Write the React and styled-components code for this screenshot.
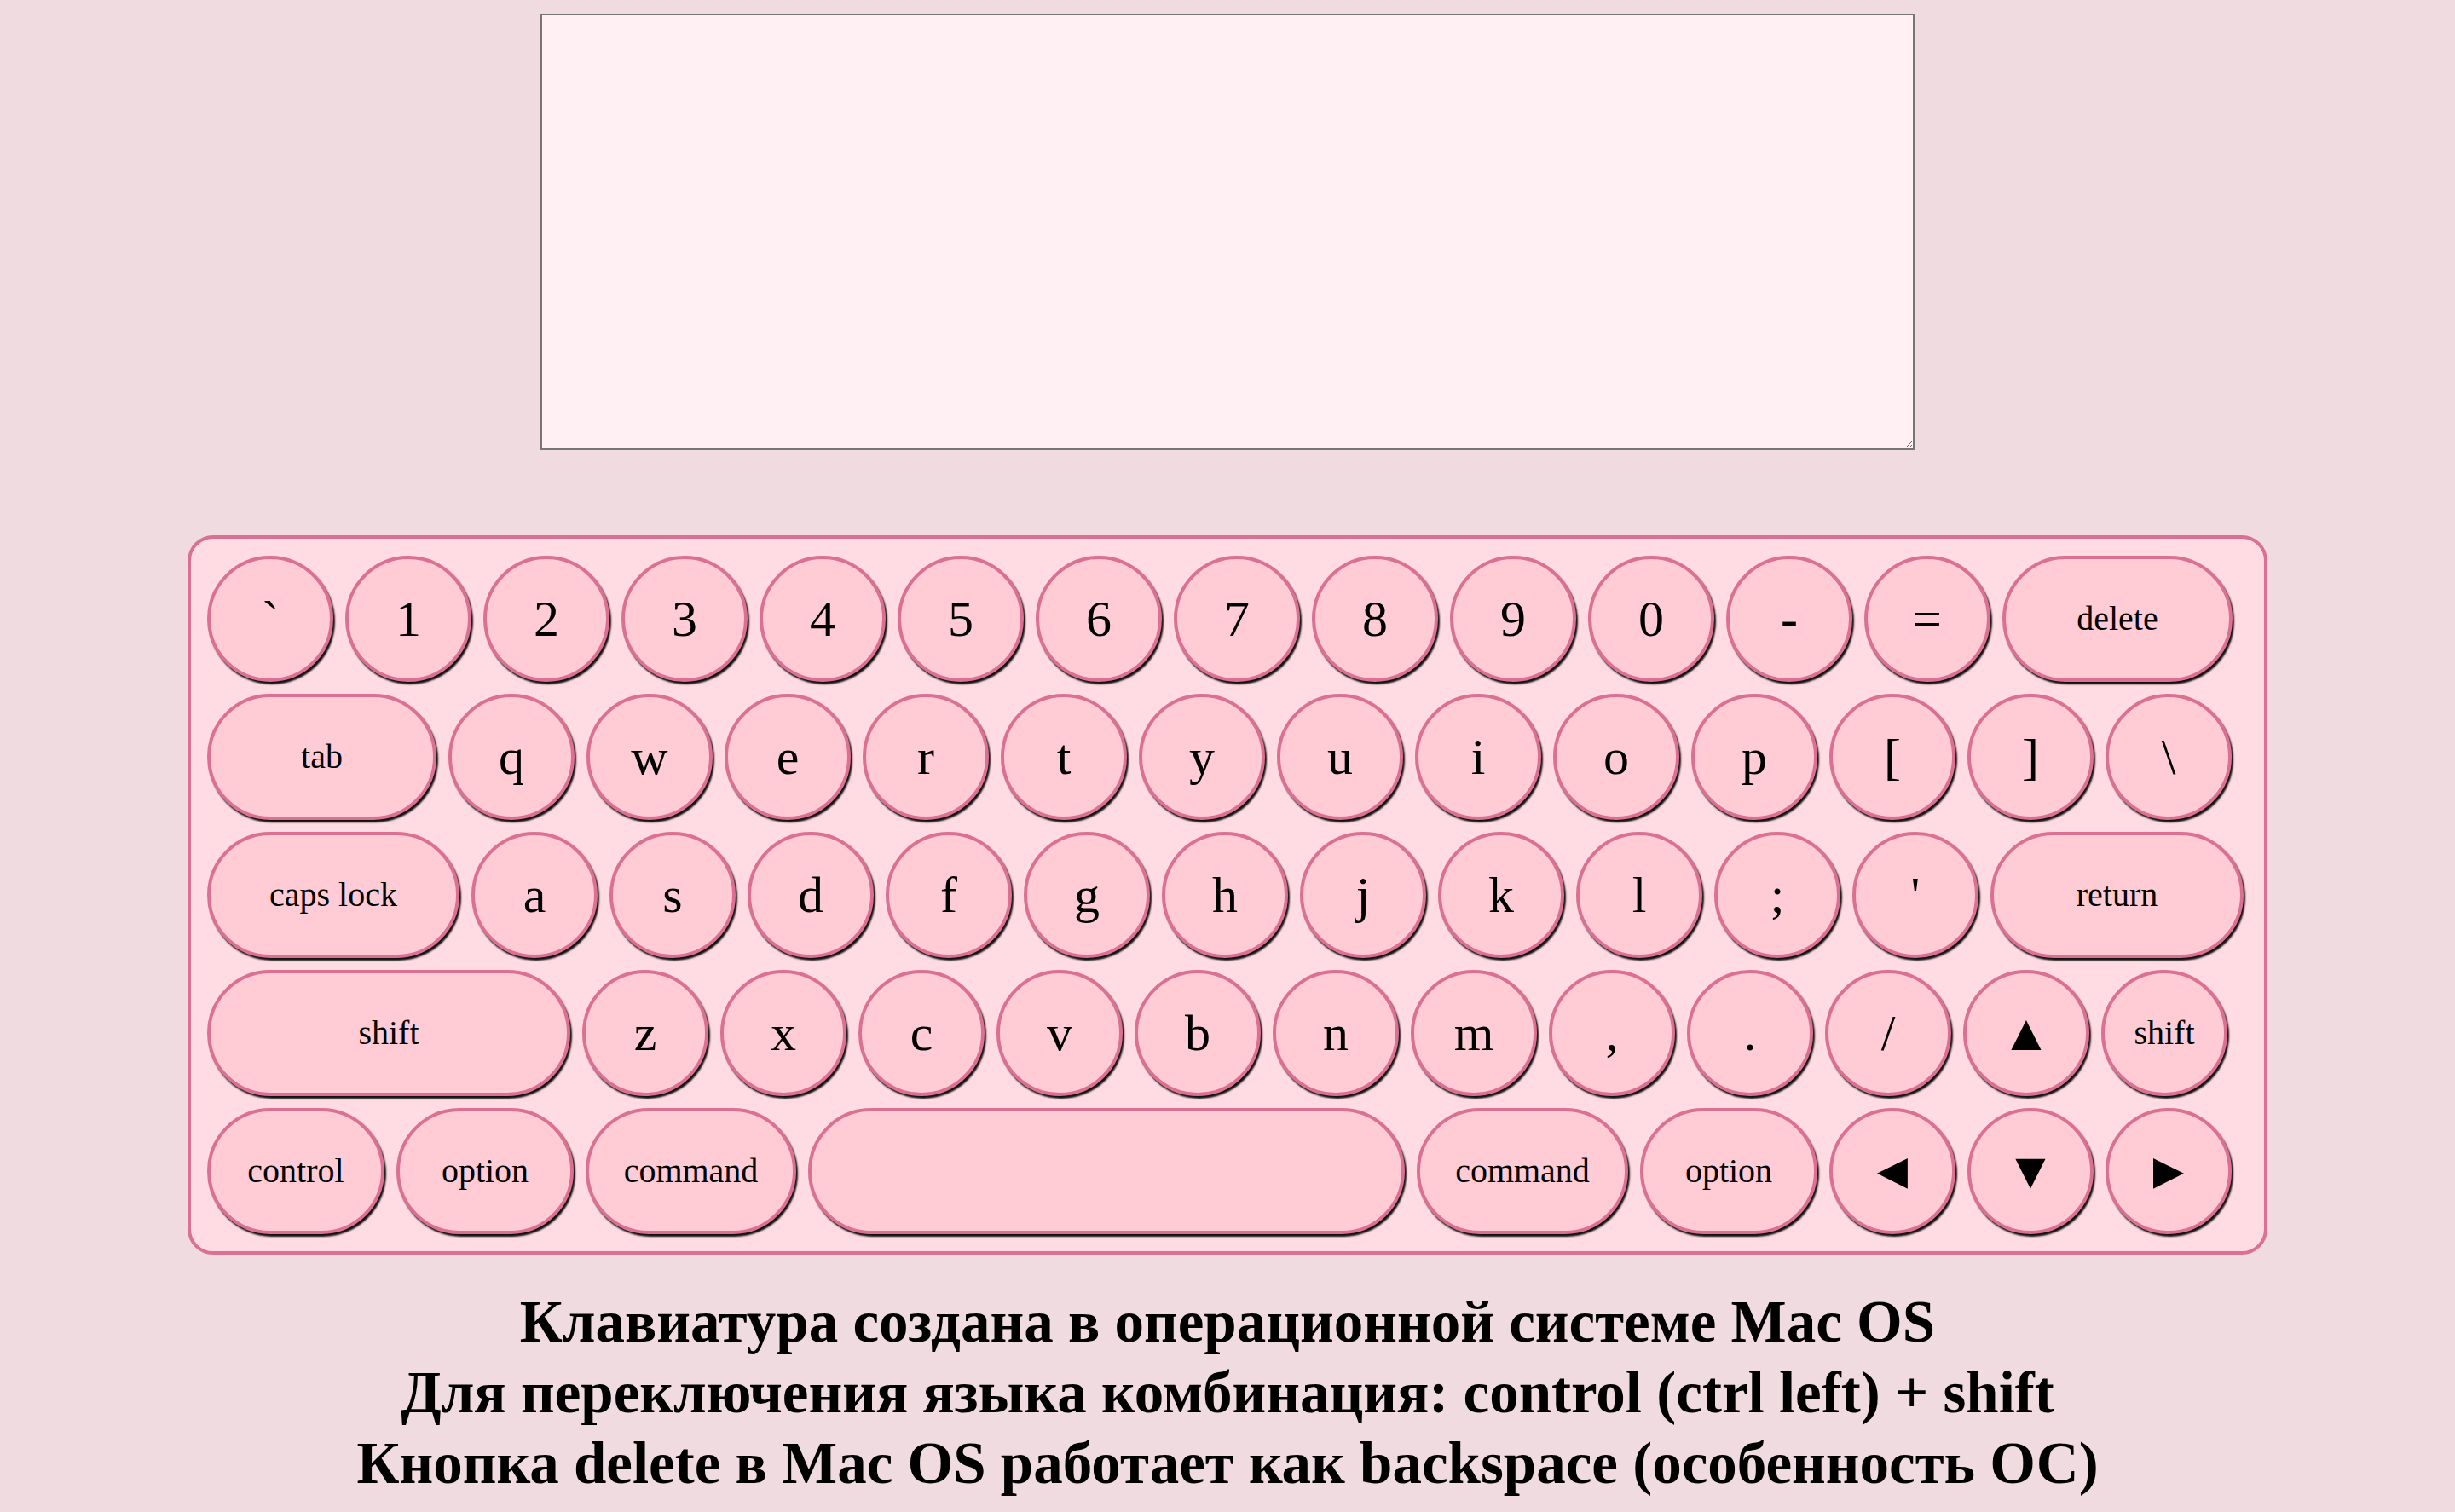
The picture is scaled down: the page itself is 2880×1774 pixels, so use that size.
import React from 'react';
import styled, { createGlobalStyle } from 'styled-components';

const GlobalStyle = createGlobalStyle`
  body {
    margin: 16px;
    background-color: #f0dce0;
    font-family: "Liberation Serif", "Times New Roman", serif;
  }
`;

const Page = styled.div`
  display: flex;
  flex-direction: column;
  align-items: center;
`;

const TextArea = styled.textarea`
  display: block;
  box-sizing: border-box;
  width: 1612px;
  height: 512px;
  background-color: #fff0f3;
  border: 2px solid #767676;
  font-family: inherit;
  font-size: 32px;
`;

const Keyboard = styled.div`
  box-sizing: border-box;
  width: 2440px;
  margin-top: 100px;
  padding: 20px 19px;
  display: flex;
  flex-direction: column;
  gap: 14px;
  background-color: #ffdbe3;
  border: 4px solid #db7093;
  border-radius: 30px;
`;

const Row = styled.div`
  display: flex;
  gap: 14px;
`;

const Key = styled.div`
  box-sizing: border-box;
  flex: none;
  width: ${props => props.$w || 148}px;
  height: 148px;
  display: flex;
  align-items: center;
  justify-content: center;
  background-color: #ffccd6;
  border: 4px solid #db7093;
  border-radius: 80px;
  box-shadow: 2px 3px 2px #111;
  color: #000;
  font-size: ${props => (props.$small ? 40 : 60)}px;
  line-height: 1;
`;

const Notes = styled.div`
  margin-top: 38px;
  text-align: center;
  font-weight: bold;
  font-size: 69px;
  line-height: 83px;
  color: #000;
`;

const rows = [
  [['`'], ['1'], ['2'], ['3'], ['4'], ['5'], ['6'], ['7'], ['8'], ['9'], ['0'], ['-'], ['='], ['delete', 270]],
  [['tab', 269], ['q'], ['w'], ['e'], ['r'], ['t'], ['y'], ['u'], ['i'], ['o'], ['p'], ['['], [']'], ['\\']],
  [['caps lock', 296], ['a'], ['s'], ['d'], ['f'], ['g'], ['h'], ['j'], ['k'], ['l'], [';'], ["'"], ['return', 297]],
  [['shift', 426], ['z'], ['x'], ['c'], ['v'], ['b'], ['n'], ['m'], [','], ['.'], ['/'], ['▲'], ['shift']],
  [['control', 208], ['option', 208], ['command', 247], ['', 700], ['command', 248], ['option', 208], ['◄'], ['▼'], ['►']],
];

export default function App() {
  return (
    <Page>
      <GlobalStyle />
      <TextArea />
      <Keyboard>
        {rows.map((row, i) => (
          <Row key={i}>
            {row.map(([label, w], j) => (
              <Key key={j} $w={w} $small={label.length > 1}>
                {label}
              </Key>
            ))}
          </Row>
        ))}
      </Keyboard>
      <Notes>
        Клавиатура создана в операционной системе Mac OS
        <br />
        Для переключения языка комбинация: control (ctrl left) + shift
        <br />
        Кнопка delete в Mac OS работает как backspace (особенность ОС)
      </Notes>
    </Page>
  );
}
